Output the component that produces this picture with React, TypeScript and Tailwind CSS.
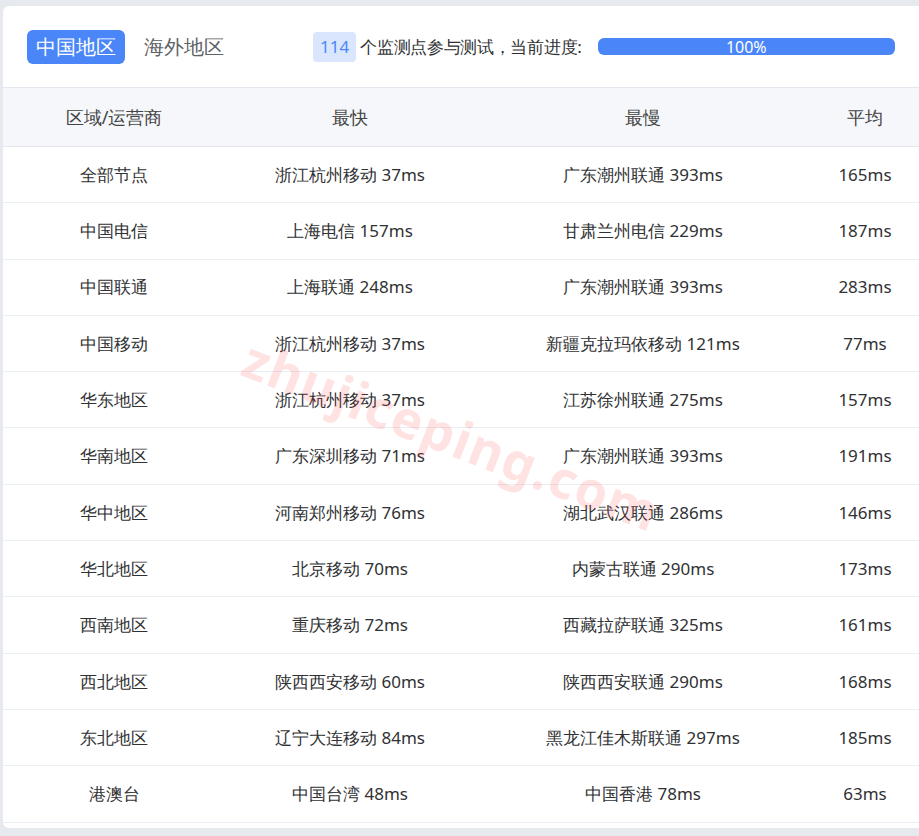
const rows = [
  ["全部节点", "浙江杭州移动 37ms", "广东潮州联通 393ms", "165ms"],
  ["中国电信", "上海电信 157ms", "甘肃兰州电信 229ms", "187ms"],
  ["中国联通", "上海联通 248ms", "广东潮州联通 393ms", "283ms"],
  ["中国移动", "浙江杭州移动 37ms", "新疆克拉玛依移动 121ms", "77ms"],
  ["华东地区", "浙江杭州移动 37ms", "江苏徐州联通 275ms", "157ms"],
  ["华南地区", "广东深圳移动 71ms", "广东潮州联通 393ms", "191ms"],
  ["华中地区", "河南郑州移动 76ms", "湖北武汉联通 286ms", "146ms"],
  ["华北地区", "北京移动 70ms", "内蒙古联通 290ms", "173ms"],
  ["西南地区", "重庆移动 72ms", "西藏拉萨联通 325ms", "161ms"],
  ["西北地区", "陕西西安移动 60ms", "陕西西安联通 290ms", "168ms"],
  ["东北地区", "辽宁大连移动 84ms", "黑龙江佳木斯联通 297ms", "185ms"],
  ["港澳台", "中国台湾 48ms", "中国香港 78ms", "63ms"],
];

const grid = "grid grid-cols-[222px_250px_336px_1fr] items-center text-center";

export default function App() {
  return (
    <div className="h-[836px] overflow-hidden bg-[#e6e9ee] pl-[3px] pt-[6px] font-['Noto_Sans_CJK_SC','Noto_Sans',sans-serif] text-[#303133]">
      <div className="relative h-[822px] overflow-hidden rounded-l-md bg-white">
        <div className="flex h-[81px] items-center pl-6 pr-6">
          <div className="flex h-[34px] items-center rounded-md bg-[#4a86f7] px-[9px] text-[20px] text-white">中国地区</div>
          <div className="ml-[19px] text-[20px] text-[#606266]">海外地区</div>
          <div className="ml-[89px] flex h-[30px] items-center rounded bg-[#d9e6fd] px-[7px] text-[17px] text-[#4a86f7]">114</div>
          <div className="ml-[4px] text-[17px] tracking-[-0.3px] text-[#303133]">个监测点参与测试，当前进度:</div>
          <div className="ml-[16px] flex h-[17px] flex-1 items-center justify-center rounded-md bg-[#4a86f7] text-[16px] leading-none text-white">100%</div>
        </div>
        <div className={`${grid} h-[60px] border-y border-[#e4e7ed] bg-[#f5f7fa] text-[18px] text-[#444]`}>
          <div>区域/运营商</div>
          <div>最快</div>
          <div>最慢</div>
          <div>平均</div>
        </div>
        {rows.map((r) => (
          <div key={r[0]} className={`${grid} h-[56.3px] border-b border-[#ebeef5] text-[17px]`}>
            {r.map((c, i) => (
              <div key={i}>{c}</div>
            ))}
          </div>
        ))}
        <div className="pointer-events-none absolute left-[228px] top-[390px] rotate-[21deg] text-[52px] font-bold tracking-wide text-[#ff3b3b]/15 font-['Liberation_Sans',sans-serif]">
          zhujiceping.com
        </div>
      </div>
    </div>
  );
}
